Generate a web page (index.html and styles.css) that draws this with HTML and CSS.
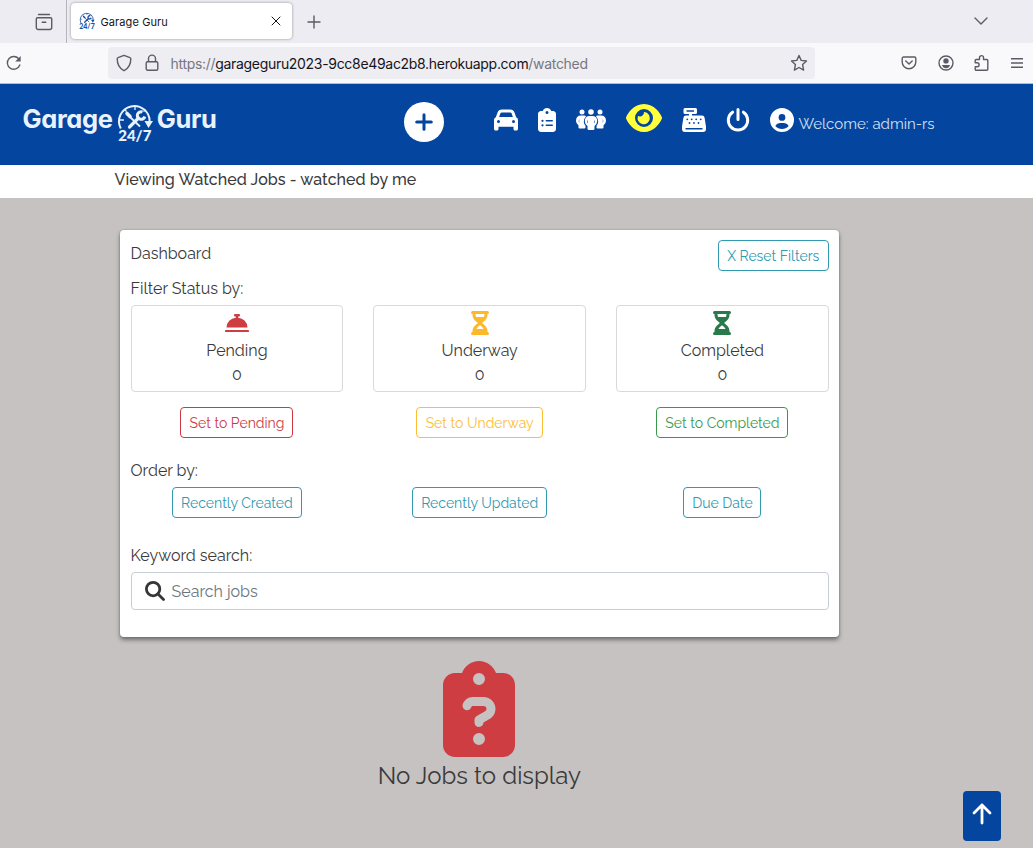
FILE: index.html
```html
<!DOCTYPE html>
<html lang="en">
<head>
<meta charset="utf-8">
<title>Garage Guru</title>
<link rel="stylesheet" href="styles.css">
</head>
<body>
<svg class="defs" width="0" height="0" aria-hidden="true">
  <symbol id="clock-tools" viewBox="0 0 36 28">
    <g fill="none" stroke="currentColor">
      <path d="M3.800 25.500A15.300 15.300 0 1 1 32.600 19" stroke-width="2"/>
      <path d="M18 3v4M3 17h4M7.500 6.500l2 2M28.500 6.500l-2 2" stroke-width="1.300"/>
      <path d="M10 10.500l3 3" stroke-width="3.600" stroke-linecap="round"/>
      <path d="M13 14l10 9.500" stroke-width="1.800"/>
      <path d="M12.500 24l9-9" stroke-width="3.200" stroke-linecap="round"/>
      <path d="M25.500 9a3.800 3.800 0 1 0 2.300 4.500" stroke-width="3"/>
    </g>
    <path d="M27.500 18h8.500l-4.500 7z" fill="currentColor"/>
  </symbol>
</svg>

<div class="tabbar">
  <div class="tab-tools">
    <svg class="i-archive" viewBox="0 0 18 18"><path d="M3.500 1.500h11M2.500 4.700h13a1.200 1.200 0 0 1 1.200 1.200v8.600a2 2 0 0 1-2 2H3.300a2 2 0 0 1-2-2V5.900a1.200 1.200 0 0 1 1.200-1.200zM7.200 9.300h3.600"/></svg>
  </div>
  <div class="tab">
    <span class="favicon"><svg viewBox="0 0 36 28"><use href="#clock-tools"/></svg><b>24/7</b></span>
    <span class="tab-title">Garage Guru</span>
    <svg class="i-close" viewBox="0 0 10 10"><path d="M1 1l8 8M9 1l-8 8"/></svg>
  </div>
  <svg class="i-new" viewBox="0 0 14 14"><path d="M7 1v12M1 7h12"/></svg>
  <svg class="i-chevron" viewBox="0 0 14 8"><path d="M1 1l6 6 6-6"/></svg>
</div>

<div class="toolbar">
  <svg class="i-reload" viewBox="0 0 16 16"><path d="M13.800 10A6.400 6.400 0 1 1 13 4.200"/><path class="solid" d="M14.700 1v5.500H9.200z"/></svg>
  <div class="urlbar">
    <svg class="i-shield" viewBox="0 0 16 18"><path d="M8 1.300l6 2.300c.6.200.8.600.8 1.200 0 5.500-2 9.300-6.300 11.500-.3.200-.7.200-1 0C3.200 14.100 1.200 10.300 1.200 4.800c0-.6.200-1 .8-1.200z"/></svg>
    <svg class="i-lock" viewBox="0 0 14 18"><rect x="1.200" y="7.700" width="11.600" height="8.500" rx="1.500"/><path d="M3.500 7.500V4.600a3.500 3.500 0 0 1 7 0v2.900"/></svg>
    <span class="url">https://<b>garageguru2023-9cc8e49ac2b8.herokuapp.com</b>/watched</span>
    <svg class="i-star" viewBox="0 0 18 18"><path d="M9 1.500l2.200 4.900 5.300.6-3.900 3.600 1 5.500L9 13.500l-4.600 2.600 1-5.500L1.500 7l5.300-.6z"/></svg>
  </div>
  <div class="tool-icons">
    <svg class="i-pocket" viewBox="0 0 16 14"><path d="M2.500 1h11a1.300 1.300 0 0 1 1.300 1.300v3.600a6.800 6.800 0 0 1-13.600 0V2.300A1.300 1.300 0 0 1 2.500 1zM4.800 4.900L8 8l3.200-3.100"/></svg>
    <svg class="i-account" viewBox="0 0 16 16"><circle cx="8" cy="8" r="7"/><circle class="solid" cx="8" cy="5.900" r="2.700"/><path class="solid" d="M4 10h8q-1 3.200-4 3.200T4 10z"/></svg>
    <svg class="i-puzzle" viewBox="0 0 16 18"><path d="M2.200 5.500h3.300V3.600a2 2 0 0 1 4 0v1.900h3.300a1 1 0 0 1 1 1v8.800a1 1 0 0 1-1 1H2.200a1 1 0 0 1-1-1v-2.500h1.900a2 2 0 0 0 0-4H1.200V6.500a1 1 0 0 1 1-1z"/></svg>
    <svg class="i-menu" viewBox="0 0 12 10"><path d="M0 .8h12M0 5h12M0 9.200h12"/></svg>
  </div>
</div>

<header class="nav">
  <a class="logo">
    <span class="logo-garage">Garage</span>
    <span class="logo-mark"><svg viewBox="0 0 36 28"><use href="#clock-tools"/></svg><b>24/7</b></span>
    <span class="logo-guru">Guru</span>
  </a>
  <a class="add"><svg viewBox="0 0 20 20"><path d="M10 2.700v14.600M2.700 10h14.600"/></svg></a>
  <nav class="links">
    <svg width="24" height="24" viewBox="0 0 512 512"><path d="M135.200 117.400L109.100 192H402.900l-26.100-74.600C372.300 104.600 360.200 96 346.600 96H165.400c-13.600 0-25.700 8.600-30.200 21.400zM39.600 196.800L74.800 96.300C88.300 57.800 124.600 32 165.400 32H346.600c40.800 0 77.100 25.800 90.600 64.300l35.200 100.500c23.200 9.600 39.600 32.500 39.600 59.200V400v48c0 17.700-14.300 32-32 32H448c-17.700 0-32-14.300-32-32V400H96v48c0 17.700-14.300 32-32 32H32c-17.700 0-32-14.300-32-32V400 256c0-26.700 16.400-49.600 39.600-59.200zM128 288a32 32 0 1 0 -64 0 32 32 0 1 0 64 0zm288 32a32 32 0 1 0 0-64 32 32 0 1 0 0 64z"/></svg>
    <svg width="18" height="24" viewBox="0 0 384 512"><path d="M192 0c-41.800 0-77.400 26.700-90.500 64H64C28.700 64 0 92.700 0 128V448c0 35.300 28.700 64 64 64H320c35.300 0 64-28.700 64-64V128c0-35.300-28.700-64-64-64H282.500C269.400 26.700 233.800 0 192 0zm0 64a32 32 0 1 1 0 64 32 32 0 1 1 0-64zM72 272a24 24 0 1 1 48 0 24 24 0 1 1 -48 0zm104-16H304c8.800 0 16 7.200 16 16s-7.200 16-16 16H176c-8.800 0-16-7.200-16-16s7.200-16 16-16zM72 368a24 24 0 1 1 48 0 24 24 0 1 1 -48 0zm88 0c0-8.800 7.200-16 16-16H304c8.800 0 16 7.200 16 16s-7.200 16-16 16H176c-8.800 0-16-7.200-16-16z"/></svg>
    <svg width="30" height="24" viewBox="0 0 30 24">
      <circle cx="6" cy="4" r="2.500"/><circle cx="15" cy="4" r="2.800"/><circle cx="24" cy="4" r="2.500"/>
      <path d="M5 7.500h3.200q1.300 0 1.800.8Q7.700 11 7.800 14q.2 2.300 1.700 3.800v1.700q0 1-1 1h-5q-1 0-1-1v-2Q0 15.500 0 13q0-5.500 5-5.500zM3.200 11q-1 2 0 4zM25 7.500h-3.200q-1.300 0-1.800.8 2.300 2.700 2.200 5.700-.2 2.300-1.700 3.800v1.700q0 1 1 1h5q1 0 1-1v-2q2.500-2 2.500-4.500 0-5.500-5-5.500zM26.800 11q1 2 0 4z"/>
      <path d="M13.800 8h2.400q5 0 5 5.300 0 2.700-2.700 4.700v2.800q0 1.200-1.200 1.200h-4.600q-1.200 0-1.200-1.200V18q-2.700-2-2.700-4.700Q8.800 8 13.800 8zM11.900 11.500q-1.200 2 0 4zM18.100 11.500v4q1.200-2 0-4z"/>
    </svg>
    <svg class="watched" width="36" height="32" viewBox="0 0 576 512"><path d="M288 32c-80.800 0-145.500 36.800-192.600 80.600C48.600 156 17.300 208 2.500 243.700c-3.300 7.900-3.300 16.700 0 24.600C17.300 304 48.600 356 95.400 399.400C142.500 443.200 207.200 480 288 480s145.500-36.800 192.600-80.600c46.800-43.500 78.100-95.400 93-131.100c3.300-7.900 3.300-16.700 0-24.600c-14.900-35.700-46.200-87.700-93-131.100C433.500 68.800 368.800 32 288 32zM144 256a144 144 0 1 1 288 0 144 144 0 1 1 -288 0z"/><path d="M288 160c0 45-30 72-64 72-12 0-23-3-32-8a98 98 0 1 0 96-64z"/></svg>
    <svg width="24" height="24" viewBox="0 0 24 24"><path fill-rule="evenodd" d="M3 0h10.500q1.500 0 1.500 1.500v3Q15 6 13.500 6H10v1.500h10q2.200 0 2.600 2.200L24 18.500V21q0 3-3 3H3q-3 0-3-3v-2.500l1.400-8.800Q1.800 7.500 4 7.500h3V6H3Q1.500 6 1.500 4.500v-3Q1.500 0 3 0zM4.500 2.250v1.500h7.500v-1.500zM3.500 20v1.500h17V20z"/><g class="keys"><circle cx="5.300" cy="11.300" r=".9"/><circle cx="9.700" cy="11.300" r=".9"/><circle cx="14.200" cy="11.300" r=".9"/><circle cx="18.700" cy="11.300" r=".9"/><circle cx="7.500" cy="15" r=".9"/><circle cx="12" cy="15" r=".9"/><circle cx="16.500" cy="15" r=".9"/></g></svg>
    <svg class="power" width="24" height="24" viewBox="0 0 24 24"><path d="M12 1.500v10M6.600 4.200a9.700 9.700 0 1 0 10.800 0"/></svg>
    <svg width="24" height="24" viewBox="0 0 512 512"><path d="M399 384.200C376.900 345.800 335.400 320 288 320H224c-47.400 0-88.900 25.800-111 64.200c35.200 39.200 86.200 63.800 143 63.800s107.800-24.700 143-63.800zM0 256a256 256 0 1 1 512 0A256 256 0 1 1 0 256zm256 16a72 72 0 1 0 0-144 72 72 0 1 0 0 144z"/></svg>
    <span class="welcome">Welcome: admin-rs</span>
  </nav>
</header>

<h1 class="page-title">Viewing Watched Jobs - watched by me</h1>

<main class="content">
  <section class="card">
    <div class="card-head"><span>Dashboard</span><button class="btn info w111">X Reset Filters</button></div>
    <div class="label">Filter Status by:</div>
    <div class="grid statuses">
      <div class="status">
        <svg class="red" width="24" height="24" viewBox="0 0 24 24"><path d="M10 3h4a1 1 0 0 1 1 1v.500a1 1 0 0 1-1 1h-.8v1.200A10 10 0 0 1 22.500 16.500h-21a10 10 0 0 1 9.300-9.800V5.500H10a1 1 0 0 1-1-1V4a1 1 0 0 1 1-1zM1 19h22a1 1 0 0 1 1 1v1H0v-1a1 1 0 0 1 1-1z"/></svg>
        <span>Pending</span><span class="count">0</span>
      </div>
      <div class="status">
        <svg class="amber" width="18" height="24" viewBox="0 0 18 24"><path fill-rule="evenodd" d="M1.500 0h15a1.500 1.500 0 0 1 0 3v.5c0 3-1.200 5.200-5.400 8.500 4.200 3.300 5.400 5.500 5.400 8.500v.5a1.500 1.500 0 0 1 0 3h-15a1.500 1.500 0 0 1 0-3v-.5c0-3 1.200-5.200 5.400-8.500C2.700 8.700 1.500 6.500 1.500 3.500V3a1.500 1.500 0 0 1 0-3zM4.500 3q0 1.600.5 3h8q.5-1.400.5-3zM9 14.200Q6.500 16 5.400 18h7.200Q11.500 16 9 14.200z"/></svg>
        <span>Underway</span><span class="count">0</span>
      </div>
      <div class="status">
        <svg class="green" width="18" height="24" viewBox="0 0 18 24"><path fill-rule="evenodd" d="M1.500 0h15a1.500 1.500 0 0 1 0 3v.5c0 3-1.200 5.200-5.400 8.500 4.200 3.300 5.400 5.500 5.400 8.500v.5a1.500 1.500 0 0 1 0 3h-15a1.500 1.500 0 0 1 0-3v-.5c0-3 1.200-5.200 5.400-8.500C2.700 8.700 1.500 6.500 1.500 3.500V3a1.500 1.500 0 0 1 0-3zM4.500 3q0 1.600.5 3h8q.5-1.400.5-3zM9 14.200Q6.500 16 5.400 18h7.200Q11.500 16 9 14.200z"/></svg>
        <span>Completed</span><span class="count">0</span>
      </div>
    </div>
    <div class="grid setters">
      <button class="btn danger w113">Set to Pending</button>
      <button class="btn warning w127">Set to Underway</button>
      <button class="btn success w132">Set to Completed</button>
    </div>
    <div class="label order">Order by:</div>
    <div class="grid orders">
      <button class="btn info w130">Recently Created</button>
      <button class="btn info w135">Recently Updated</button>
      <button class="btn info w78">Due Date</button>
    </div>
    <div class="label keyword">Keyword search:</div>
    <div class="search">
      <svg viewBox="0 0 20 20"><circle cx="8.100" cy="8.100" r="6.700"/><path d="M13 13l5.500 5.500"/></svg>
      <span>Search jobs</span>
    </div>
  </section>

  <section class="empty">
    <svg viewBox="0 0 384 512"><path d="M192 0c-41.800 0-77.400 26.700-90.500 64H64C28.700 64 0 92.700 0 128V448c0 35.300 28.700 64 64 64H320c35.300 0 64-28.700 64-64V128c0-35.300-28.700-64-64-64H282.500C269.400 26.700 233.800 0 192 0zm0 64a32 32 0 1 1 0 64 32 32 0 1 1 0-64zM105.800 229.300c7.900-22.300 29.100-37.300 52.800-37.300h58.300c34.900 0 63.100 28.300 63.100 63.100c0 22.600-12.100 43.500-31.700 54.800L216 328.400c-.2 13-10.900 23.600-24 23.600c-13.300 0-24-10.700-24-24V314.500c0-8.600 4.600-16.500 12.100-20.800l44.300-25.400c4.700-2.700 7.600-7.700 7.600-13.100c0-8.400-6.800-15.100-15.100-15.100H158.600c-3.400 0-6.400 2.100-7.500 5.300l-.4 1.200c-4.400 12.500-18.200 19-30.600 14.600s-19-18.200-14.600-30.600l.4-1.200zM160 416a32 32 0 1 1 64 0 32 32 0 1 1 -64 0z"/></svg>
    <p>No Jobs to display</p>
  </section>
</main>
<a class="to-top"><svg viewBox="0 0 20 22"><path d="M10 20V2M2 10l8-8 8 8"/></svg></a>
</body>
</html>
```
FILE: styles.css
```css
* { box-sizing: border-box; }
body {
  margin: 0;
  height: 848px;
  overflow: hidden;
  background: #c6c2c1;
  color: #3a3a3a;
  font: 16px/24px Raleway, Lato, sans-serif;
  white-space: nowrap;
}
svg { display: block; flex: none; }
.defs { position: absolute; }

/* Browser chrome */
.tabbar {
  display: flex;
  align-items: center;
  height: 43px;
  background: #edecf2;
  font-family: Inter, sans-serif;
}
.tabbar > svg, .tab > svg, .tab-tools svg, .toolbar svg {
  fill: none;
  stroke: #5b5b66;
  stroke-width: 1.4;
  stroke-linejoin: round;
  stroke-linecap: round;
}
.toolbar .solid { fill: #5b5b66; stroke: none; }
.tab-tools {
  display: flex;
  align-items: center;
  width: 67px;
  height: 43px;
  padding-left: 35px;
  border-right: 1px solid #b4b4ba;
}
.i-archive { width: 18px; height: 18px; }
.tab {
  display: flex;
  align-items: center;
  width: 221px;
  height: 36px;
  margin: 0 0 2px 4px;
  padding: 0 11px 0 8px;
  background: #fff;
  border-radius: 4px;
  box-shadow: 0 0 3px #0006;
}
.favicon { width: 16px; color: #1c50a4; }
.favicon svg { width: 16px; height: 12px; stroke-width: 2; }
.favicon b { display: block; font: 900 7px/5px Lato, sans-serif; text-align: center; }
.tab-title { margin: 3px auto 0 5.500px; font-size: 11px; line-height: 16px; color: #15141a; letter-spacing: .1px; }
.tab > .i-close { width: 10px; height: 10px; stroke: #15141a; stroke-width: 1; }
.i-new { width: 14px; height: 14px; margin-left: 15px; }
.i-chevron { width: 14px; height: 8px; margin: 0 45px 1px auto; }
.toolbar {
  display: flex;
  align-items: center;
  height: 41px;
  padding: 0 10px 0 6px;
  background: #f9f9fb;
  border-bottom: 1px solid #bcbcc0;
}
.i-reload { width: 16px; height: 16px; }
.urlbar {
  display: flex;
  align-items: center;
  width: 707px;
  height: 32px;
  margin-left: 86px;
  padding: 0 7px 0 8px;
  background: #eeedf2;
  border-radius: 4px;
}
.i-shield { width: 16px; height: 18px; }
.i-lock { width: 14px; height: 18px; margin-left: 13px; }
.url { margin: 2px auto 0 11.500px; font: 14px/20px Inter, sans-serif; color: #77767e; letter-spacing: -.31px; }
.url b { font-weight: 400; color: #15141a; }
.i-star { width: 18px; height: 18px; }
.tool-icons { display: flex; align-items: center; margin-left: auto; }
.i-pocket { width: 16px; height: 14px; }
.i-account { width: 16px; height: 16px; margin-left: 21px; }
.i-puzzle { width: 16px; height: 18px; margin-left: 20px; }
.i-menu { width: 12px; height: 10px; margin-left: 21px; }

/* Site header */
.nav {
  display: flex;
  align-items: flex-start;
  height: 81px;
  padding-left: 22.500px;
  background: #0445a0;
  color: #fff;
}
.logo {
  display: flex;
  width: 194px;
  padding-top: 19px;
  font: 700 25.500px/32px Inter, sans-serif;
  font-feature-settings: "cv11";
  letter-spacing: -.4px;
  color: #e9f3ff;
}
.logo-garage { width: 94.500px; }
.logo-mark { width: 36px; margin-right: 4px; }
.logo-mark svg { width: 36px; height: 28px; }
.logo-mark b { display: block; margin-top: -3px; font: 900 15px/14px Lato, sans-serif; text-align: center; letter-spacing: 0; }
.add {
  display: flex;
  align-items: center;
  justify-content: center;
  width: 40px;
  height: 40px;
  margin: 18px 0 0 187px;
  border-radius: 50%;
  background: #fff;
}
.add svg { width: 20px; height: 20px; fill: none; stroke: #0445a0; stroke-width: 3; stroke-linecap: round; }
.links { display: flex; align-items: center; gap: 20px; height: 36px; margin: 18px 0 0 50px; fill: #fff; }
.links .watched { fill: #ffff3c; margin-top: -4px; }
.keys { fill: #0445a0; }
.links .power { fill: none; stroke: #fff; stroke-width: 3; stroke-linecap: round; }
.welcome { margin: 8px 0 0 -15px; font-size: 15px; color: #d4e0f0; }

/* Page */
.page-title { height: 33px; margin: 0; padding: 3px 0 0 114.500px; background: #fff; font-size: 16px; line-height: 24px; font-weight: 500; letter-spacing: .05px; color: #3a3a3a; }
.content { width: 719px; margin-left: 120.400px; padding-top: 32px; }
.card {
  height: 407px;
  padding: 10px 10.600px 10px 10.200px;
  border-radius: 4px;
  background: #fff;
  box-shadow: 0 3px 4px #3c463ca0, 0 0 2px #0004;
}
.card-head { display: flex; justify-content: space-between; height: 36px; line-height: 28px; }
.label { height: 29px; line-height: 25px; }
.grid { display: grid; grid-template-columns: repeat(3, 1fr); column-gap: 30px; justify-items: center; }
.status {
  display: flex;
  flex-direction: column;
  align-items: center;
  width: 100%;
  height: 87px;
  padding-top: 5px;
  border: 1px solid #d9d9d9;
  border-radius: 4px;
}
.status svg { margin-bottom: 4px; }
.red, .empty svg { fill: #cd3d42; }
.amber { fill: #fdb92c; }
.green { fill: #297a4a; }
.count { line-height: 24px; }
.btn {
  height: 31px;
  padding: 1px 0 0;
  border: 1px solid;
  border-radius: 4px;
  background: #fff;
  font: 14px/28px Raleway, Lato, sans-serif;
}
.info { color: #2f9ab2; }
.danger { color: #cd3945; }
.warning { color: #fdbe35; }
.success { color: #38994a; }
.w111 { width: 111px; }
.w113 { width: 113px; }
.w127 { width: 127px; }
.w132 { width: 132px; }
.w130 { width: 130px; }
.w135 { width: 135px; }
.w78 { width: 78px; }
.setters { margin-top: 15px; }
.order { margin-top: 20px; }
.keyword { margin-top: 25px; }
.search {
  display: flex;
  align-items: center;
  height: 38px;
  padding-left: 13.500px;
  border: 1px solid #c9cdd4;
  border-radius: 4px;
  color: #6c757d;
}
.search svg { width: 20px; height: 20px; margin: -1px 6.500px 0 0; fill: none; stroke: #363636; stroke-width: 2.8; stroke-linecap: round; }
.search span { padding-top: 1px; }
.empty { padding: 24px 1px 0 0; }
.empty svg { width: 72px; height: 96px; margin: 0 auto; }
.empty p { margin: 4px 0 0; font-size: 24px; line-height: 30px; text-align: center; }
.to-top {
  position: fixed;
  right: 32px;
  bottom: 7px;
  display: flex;
  justify-content: center;
  width: 38px;
  height: 50px;
  padding-top: 12px;
  border-radius: 4px;
  background: #0445a0;
}
.to-top svg { width: 20px; height: 22px; fill: none; stroke: #fff; stroke-width: 2.8; stroke-linecap: round; stroke-linejoin: round; }
```
